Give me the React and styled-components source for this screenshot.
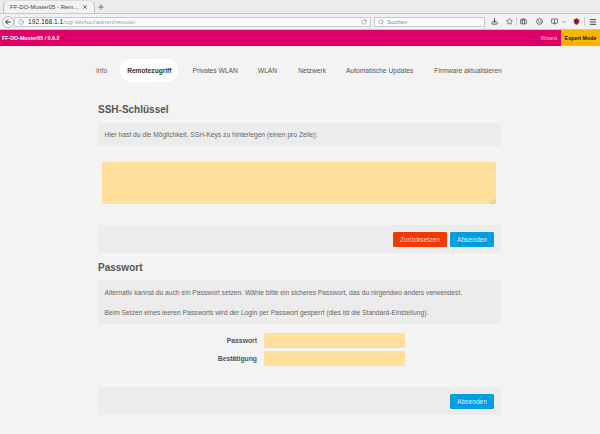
import React from "react";
import styled, { createGlobalStyle } from "styled-components";
import { ArrowLeft, Info, RotateCw, Search, Download, Star, Briefcase, Menu, ChevronDown, Plus, X, Shield, Smile, BookOpen } from "lucide-react";

const Global = createGlobalStyle`
  html, body { margin: 0; padding: 0; background: #f3f3f3; }
  body { width: 600px; height: 434px; overflow: hidden; font-family: "Liberation Sans", Arial, sans-serif; }
  * { box-sizing: border-box; }
`;

const Page = styled.div`
  width: 600px; height: 434px; display: flex; flex-direction: column; overflow: hidden;
`;
const TabBar = styled.div`
  height: 13px; background: #ececec; display: flex; align-items: flex-end; padding-left: 3px; flex: none;
`;
const Tab = styled.div`
  width: 92px; height: 13px; background: #f2f2f2; border: 1px solid #bdbdbd; border-bottom: none; border-top-color: #dcdcdc;
  border-radius: 6px 6px 0 0; display: flex; align-items: center; justify-content: space-between;
  padding: 0 6px 0 6px; font-size: 6px; color: #444;
`;
const NewTab = styled.div`
  height: 13px; width: 12px; display: flex; align-items: center; justify-content: center; color: #444;
`;
const NavBar = styled.div`
  height: 17px; background: #f2f2f2; border-top: 1px solid #c8c8c8; border-bottom: 1px solid #c4c4c4;
  display: flex; align-items: center; padding: 0 1px 0 2px; flex: none;
`;
const BackButton = styled.div`
  width: 12px; height: 12px; border-radius: 50%; border: 1px solid #bbb; background: #fafafa; display: flex;
  align-items: center; justify-content: center; color: #333; flex: none;
`;
const UrlBox = styled.div`
  width: 357px; height: 10px; background: #fff; border: 1px solid #c8c8c8; display: flex;
  align-items: center; padding: 0 3px 0 3px; font-size: 6.2px; color: #999; flex: none;
`;
const Host = styled.span`color: #222; font-size: 6.7px; margin-left: 4px;`;
const Spacer = styled.span`flex: 1;`;
const SearchBox = styled.div`
  width: 111px; height: 10px; margin-left: 3px; background: #fff; border: 1px solid #c8c8c8; display: flex; gap: 3px;
  align-items: center; padding: 0 3px; font-size: 6px; color: #888; flex: none;
`;
const ToolIcons = styled.div`
  flex: 1; display: flex; align-items: center; color: #444; padding-left: 6px;
`;
const Tool = styled.span`
  display: flex; align-items: center; margin-left: ${p => p.$ml}px; flex: none;
`;
const Divider = styled.span`
  width: 1px; height: 9px; background: #cfcfcf; margin-left: ${p => p.$ml}px; flex: none;
`;
const TopBar = styled.div`
  height: 16px; background: #dc0067; display: flex; align-items: center; justify-content: space-between; flex: none;
  font-size: 5.3px; color: #fff;
`;
const Brand = styled.div`font-weight: 700; padding-left: 2px;`;
const TopRight = styled.div`display: flex; align-items: stretch; height: 100%;`;
const WizardLink = styled.div`display: flex; align-items: center; padding-right: 4px; color: #fbe;`;
const ExpertLink = styled.div`
  width: 39px; background: #ffb400; color: #111; font-weight: 700; display: flex; align-items: center; justify-content: center;
`;
const Tabs = styled.nav`
  display: flex; align-items: center; height: 23px; margin: 13px 0 0 96px; font-size: 6.7px; color: #555; flex: none;
`;
const NavItem = styled.div`
  height: 23px; display: flex; align-items: center; white-space: nowrap; padding-bottom: 1px;
  margin-right: ${p => p.$gap}px;
  ${p => p.$active && `
    background: #fff; border-radius: 12px; padding: 0 7px 1px; font-weight: 700; color: #333; font-size: 6.6px;
  `}
`;
const Content = styled.main`
  width: 403px; margin-left: 98px; display: flex; flex-direction: column; flex: none;
`;
const Heading = styled.h2`
  margin: ${p => p.$top}px 0 0; height: 14px; font-size: 10px; line-height: 16px; font-weight: 700; color: #555;
`;
const Note = styled.div`
  background: #ececec; margin-top: ${p => p.$top}px; padding: 0 6.5px; font-size: 6.7px; color: #666;
  height: ${p => p.$h}px; display: flex; flex-direction: column; justify-content: center; gap: ${p => p.$gap || 0}px;
`;
const Line = styled.div`line-height: 9px; white-space: nowrap;`;
const KeyArea = styled.div`
  height: 42px; margin: 16px 5px 0 4px; background: #ffdf9b; border-radius: 1px; position: relative;
`;
const Grip = styled.svg`position: absolute; right: 0; bottom: 0;`;
const Actions = styled.div`
  background: #ececec; height: 28px; margin-top: ${p => p.$top}px; display: flex; align-items: center; justify-content: flex-end;
  gap: 3px; padding-right: 7px;
`;
const Btn = styled.div`
  height: 15px; width: ${p => p.$w}px; background: ${p => p.$bg}; color: ${p => p.$fg}; font-size: 6.7px; display: flex;
  align-items: center; justify-content: center; border-radius: 1px; outline: 1px solid #f4f4f4;
`;
const FormRow = styled.div`
  display: grid; grid-template-columns: 159px 141px; column-gap: 7px; align-items: center; margin-top: ${p => p.$top}px; height: 15px;
`;
const Label = styled.label`text-align: right; font-size: 6.8px; font-weight: 700; color: ${p => p.$c};`;
const Field = styled.div`height: 15px; background: #ffdf9b; border-radius: 1px;`;

export default function App() {
  return (
    <Page>
      <Global />
      <TabBar>
        <Tab>FF-DO-Muster05 - Rem... <X size={6} strokeWidth={3} /></Tab>
        <NewTab><Plus size={8} strokeWidth={2} /></NewTab>
      </TabBar>
      <NavBar>
        <BackButton><ArrowLeft size={8} strokeWidth={3} /></BackButton>
        <UrlBox>
          <Info size={6} color="#777" />
          <Host>192.168.1.1</Host>/cgi-bin/luci/admin/remote/
          <Spacer />
          <RotateCw size={6} color="#666" />
        </UrlBox>
        <SearchBox><Search size={6} color="#777" />Suchen</SearchBox>
        <ToolIcons>
          <Tool $ml={0}><Download size={7} strokeWidth={3} /></Tool>
          <Tool $ml={8}><Star size={7} strokeWidth={2} /></Tool>
          <Divider $ml={3} />
          <Tool $ml={3}><Briefcase size={7} strokeWidth={2.5} /></Tool>
          <Tool $ml={9}><Smile size={7} strokeWidth={2.5} /></Tool>
          <Tool $ml={8}><BookOpen size={7} strokeWidth={2.5} /></Tool>
          <Tool $ml={3}><ChevronDown size={6} /></Tool>
          <Tool $ml={6}><Shield size={7} fill="#90191c" color="#90191c" /></Tool>
          <Divider $ml={4} />
          <Tool $ml={4}><Menu size={8} strokeWidth={3} /></Tool>
        </ToolIcons>
      </NavBar>
      <TopBar>
        <Brand>FF-DO-Muster05 / 0.9.2</Brand>
        <TopRight>
          <WizardLink>Wizard</WizardLink>
          <ExpertLink>Expert Mode</ExpertLink>
        </TopRight>
      </TopBar>
      <Tabs>
        <NavItem $gap={13}>Info</NavItem>
        <NavItem $active $gap={14}>Remotezugriff</NavItem>
        <NavItem $gap={20}>Privates WLAN</NavItem>
        <NavItem $gap={21}>WLAN</NavItem>
        <NavItem $gap={20}>Netzwerk</NavItem>
        <NavItem $gap={21}>Automatische Updates</NavItem>
        <NavItem $gap={0}>Firmware aktualisieren</NavItem>
      </Tabs>
      <Content>
        <Heading $top={20}>SSH-Schlüssel</Heading>
        <Note $top={7} $h={23}><Line>Hier hast du die Möglichkeit, SSH-Keys zu hinterlegen (einen pro Zeile):</Line></Note>
        <KeyArea>
          <Grip width="5" height="5" viewBox="0 0 5 5"><path d="M0 5L5 0M2.5 5L5 2.5" stroke="#b9a980" strokeWidth="0.6" /></Grip>
        </KeyArea>
        <Actions $top={21}>
          <Btn $w={54} $bg="#f03a00" $fg="#ffd9cc">Zurücksetzen</Btn>
          <Btn $w={44} $bg="#009ee0" $fg="#d9f1fb">Absenden</Btn>
        </Actions>
        <Heading $top={7}>Passwort</Heading>
        <Note $top={6} $h={44} $gap={11}>
          <Line>Alternativ kannst du auch ein Passwort setzen. Wähle bitte ein sicheres Passwort, das du nirgendwo anders verwendest.</Line>
          <Line>Beim Setzen eines leeren Passworts wird der Login per Passwort gesperrt (dies ist die Standard-Einstellung).</Line>
        </Note>
        <FormRow $top={9}><Label $c="#555">Passwort</Label><Field /></FormRow>
        <FormRow $top={3}><Label $c="#4d5566">Bestätigung</Label><Field /></FormRow>
        <Actions $top={21}>
          <Btn $w={44} $bg="#009ee0" $fg="#d9f1fb">Absenden</Btn>
        </Actions>
      </Content>
    </Page>
  );
}
